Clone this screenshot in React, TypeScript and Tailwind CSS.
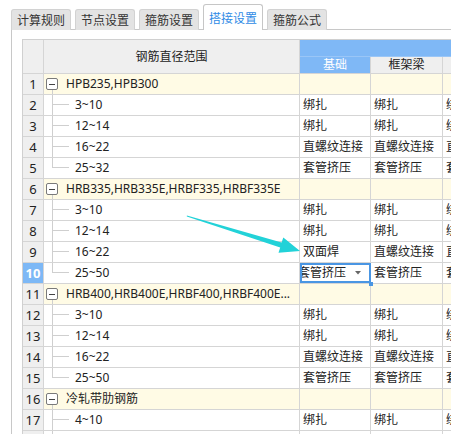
import React from 'react';

type Row = {
  n: number;
  group?: string;
  range?: string;
  v?: string[];
  last?: boolean;
};

const rows: Row[] = [
  { n: 1, group: 'HPB235,HPB300' },
  { n: 2, range: '3~10', v: ['绑扎', '绑扎', '绑扎'] },
  { n: 3, range: '12~14', v: ['绑扎', '绑扎', '绑扎'] },
  { n: 4, range: '16~22', v: ['直螺纹连接', '直螺纹连接', '直螺纹连接'] },
  { n: 5, range: '25~32', v: ['套管挤压', '套管挤压', '套管挤压'], last: true },
  { n: 6, group: 'HRB335,HRB335E,HRBF335,HRBF335E' },
  { n: 7, range: '3~10', v: ['绑扎', '绑扎', '绑扎'] },
  { n: 8, range: '12~14', v: ['绑扎', '绑扎', '绑扎'] },
  { n: 9, range: '16~22', v: ['双面焊', '直螺纹连接', '直螺纹连接'] },
  { n: 10, range: '25~50', v: ['套管挤压', '套管挤压', '套管挤压'], last: true },
  { n: 11, group: 'HRB400,HRB400E,HRBF400,HRBF400E...' },
  { n: 12, range: '3~10', v: ['绑扎', '绑扎', '绑扎'] },
  { n: 13, range: '12~14', v: ['绑扎', '绑扎', '绑扎'] },
  { n: 14, range: '16~22', v: ['直螺纹连接', '直螺纹连接', '直螺纹连接'] },
  { n: 15, range: '25~50', v: ['套管挤压', '套管挤压', '套管挤压'], last: true },
  { n: 16, group: '冷轧带肋钢筋' },
  { n: 17, range: '4~10', v: ['绑扎', '绑扎', '绑扎'] },
  { n: 18, range: '10.5~12', v: ['绑扎', '绑扎', '绑扎'] },
];

const tabs = ['计算规则', '节点设置', '箍筋设置', '搭接设置', '箍筋公式'];
const colW = ['w-[71px]', 'w-[72px]', 'w-[72px]'];

function SelectedCell({ text }: { text: string }) {
  return (
    <div className="relative w-[71px] shrink-0 border-r border-[#d5d5d5]">
      <div className="absolute inset-[2px] overflow-hidden flex items-center whitespace-nowrap">
        <span className="ml-[-4px]">{text}</span>
        <svg width="6" height="4" viewBox="0 0 6 4" className="ml-[9px] shrink-0">
          <path d="M0 0 L6 0 L3 3.5 Z" fill="#666" />
        </svg>
      </div>
      <div className="absolute top-0 left-0 right-[-1px] bottom-0 border-2 border-[#4a96e3]" />
      <div className="absolute right-[-3px] bottom-[-3px] w-[4px] h-[4px] bg-[#4a96e3]" />
    </div>
  );
}

function GridRow({ row }: { row: Row }) {
  const selected = row.n === 10;
  if (row.group) {
    return (
      <div className="flex h-[21px] border-b border-[#d5d5d5] bg-[#fffbe5]">
        <div className="w-[21px] shrink-0 border-r border-[#d5d5d5] bg-[#efefef] flex items-center justify-center text-[13px]">
          {row.n}
        </div>
        <div className="w-[256px] shrink-0 border-r border-[#d5d5d5] flex items-stretch">
          <div className="ml-[2px] w-[12px] shrink-0 flex flex-col items-center pt-[4px]">
            <div className="w-[12px] h-[12px] shrink-0 border border-[#7a7a7a] rounded-[2px] bg-white flex items-center justify-center">
              <div className="w-[6px] h-px bg-[#444]" />
            </div>
            <div className="flex-1 w-px bg-[#cfcfcf]" />
          </div>
          <div className="ml-[8px] flex items-center whitespace-nowrap">{row.group}</div>
        </div>
        {colW.map((w, i) => (
          <div key={i} className={`${w} shrink-0 border-r border-[#d5d5d5]`} />
        ))}
      </div>
    );
  }
  return (
    <div className="flex h-[21px] border-b border-[#d5d5d5] bg-white">
      <div
        className={`w-[21px] shrink-0 border-r border-[#d5d5d5] flex items-center justify-center text-[13px] ${
          selected ? 'bg-[#7db8f6] text-white font-bold' : 'bg-[#efefef]'
        }`}
      >
        {row.n}
      </div>
      <div className="w-[256px] shrink-0 border-r border-[#d5d5d5] flex items-stretch">
        <div className="ml-[8px] w-[17px] shrink-0 flex flex-col">
          <div className="h-1/2 border-l border-b border-[#cfcfcf]" />
          <div className={`h-1/2 ${row.last ? '' : 'border-l border-[#cfcfcf]'}`} />
        </div>
        <div className="ml-[6px] flex items-center">{row.range}</div>
      </div>
      {row.v!.map((t, i) =>
        selected && i === 0 ? (
          <SelectedCell key={i} text={t} />
        ) : (
          <div
            key={i}
            className={`${colW[i]} shrink-0 border-r border-[#d5d5d5] pl-[3px] flex items-center whitespace-nowrap overflow-hidden`}
          >
            {t}
          </div>
        )
      )}
    </div>
  );
}

export default function App() {
  return (
    <div
      className="relative w-[451px] h-[434px] overflow-hidden bg-white text-[12px] text-[#222] leading-none"
      style={{ fontFamily: '"Noto Sans", "Noto Sans CJK SC", sans-serif' }}
    >
      {/* Tabs */}
      <div className="flex items-end gap-[4px] pl-[11px] h-[30px]">
        {tabs.map((t) =>
          t === '搭接设置' ? (
            <div
              key={t}
              className="relative z-10 w-[60px] h-[26px] bg-white border border-b-0 border-[#c6c6c6] rounded-t-[3px] flex items-center justify-center pt-[3px] text-[#2f8be6]"
            >
              {t}
            </div>
          ) : (
            <div
              key={t}
              className="w-[60px] h-[21px] bg-[#e3e3e3] border border-b-0 border-[#d2d2d2] rounded-t-[3px] flex items-center justify-center pt-px text-[#333]"
            >
              {t}
            </div>
          )
        )}
      </div>

      {/* Panel */}
      <div className="ml-[11px] mt-[-1px] border-l border-t border-[#c8c8c8] pt-[9px] pl-[10px]">
        <div className="w-max border-l border-t border-[#d0d0d0]">
          {/* Header */}
          <div className="flex h-[34px] border-b border-[#d5d5d5]">
            <div className="w-[21px] shrink-0 border-r border-[#d5d5d5] bg-[#efefef]" />
            <div className="w-[256px] shrink-0 border-r border-[#d5d5d5] bg-[#efefef] flex items-center justify-center">
              钢筋直径范围
            </div>
            <div className="flex flex-col">
              <div className="h-[17px] bg-[#7fb8f6] border-b border-[#9ac6f7]" />
              <div className="flex h-[16px]">
                <div className="w-[71px] shrink-0 border-r border-[#d5d5d5] bg-[#7fb8f6] text-white flex items-center justify-center">
                  基础
                </div>
                <div className="w-[72px] shrink-0 border-r border-[#d5d5d5] bg-[#efefef] flex items-center justify-center">
                  框架梁
                </div>
                <div className="w-[72px] shrink-0 border-r border-[#d5d5d5] bg-[#efefef]" />
              </div>
            </div>
          </div>
          {rows.map((r) => (
            <GridRow key={r.n} row={r} />
          ))}
        </div>
      </div>

      {/* Annotation arrow */}
      <svg className="absolute left-0 top-0 pointer-events-none" width="451" height="434">
        <polygon
          points="186.9,215.4 281.6,242.4 283.3,237.5 300,251 278.5,252.7 280.2,247.6 186.8,216.6"
          fill="#22d2d8"
        />
      </svg>
    </div>
  );
}
